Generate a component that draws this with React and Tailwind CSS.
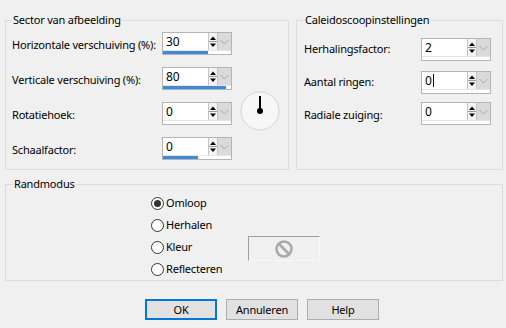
import React from 'react';

function SpinBox({ value, bar, caret }) {
  return (
    <div className="flex h-[23px] w-[70px] flex-col border border-[#b4b4b4] bg-white">
      <div className="flex h-[17px]">
        <div className="flex flex-1 items-center pl-[3px] text-[12px] leading-none tracking-normal text-black">
          {value}
          {caret && <span className="ml-[1px] h-[13px] w-px bg-black" />}
        </div>
        <div className="flex w-[10px] items-center justify-center border-x border-[#c4c4c4] bg-[#f4f4f4]">
          <svg width="8" height="15" viewBox="0 0 8 15">
            <path d="M1 6 L4 2.5 L7 6 Z" fill="#000" />
            <line x1="0" y1="7.5" x2="8" y2="7.5" stroke="#9a9a9a" strokeWidth="1" />
            <path d="M1 9.5 L4 13 L7 9.5 Z" fill="#000" />
          </svg>
        </div>
        <div className="flex w-[13px] items-center justify-center bg-[#dadada]">
          <svg width="9" height="6" viewBox="0 0 9 6">
            <path d="M0.5 1 L4.5 5 L8.5 1" fill="none" stroke="#a8a8a8" strokeWidth="1" />
          </svg>
        </div>
      </div>
      <div className="h-[4px] border-t border-[#e6e6e6] bg-white">
        {bar !== undefined && <div className="h-full bg-[#3f8bd8]" style={{ width: bar }} />}
      </div>
    </div>
  );
}

function Radio({ label, checked }) {
  return (
    <div className="flex h-[22px] items-center">
      <span className="flex h-[13px] w-[13px] items-center justify-center rounded-full border border-[#333333] bg-white">
        {checked && <span className="h-[7px] w-[7px] rounded-full bg-[#333333]" />}
      </span>
      <span className="ml-[2px] text-black">{label}</span>
    </div>
  );
}

function Dial() {
  return (
    <svg width="42" height="42" viewBox="0 0 42 42">
      <circle cx="21" cy="21" r="19" fill="#f7f7f7" stroke="#d4d4d4" strokeWidth="1" />
      <line x1="21" y1="6" x2="21" y2="21" stroke="#000" strokeWidth="2" />
      <circle cx="21" cy="21" r="3" fill="#000" />
    </svg>
  );
}

export default function App() {
  return (
    <div className="h-[328px] w-[506px] overflow-hidden whitespace-nowrap bg-[#f0f0f0] font-['Noto_Sans',sans-serif] text-[11px] tracking-[-0.2px] text-black">
      <div className="flex pt-[12px]">
        <fieldset className="ml-[5px] h-[158px] w-[284px] border border-[#dcdcdc] px-[6px]">
          <legend className="px-[1px] leading-[16px]">Sector van afbeelding</legend>
          <div className="grid grid-cols-[150px_70px_auto] grid-rows-[repeat(4,23px)] gap-y-[12px] pt-[4px]">
            <div className="flex items-center pt-[4px]">Horizontale verschuiving (%):</div>
            <SpinBox value="30" bar={45} />
            <div />
            <div className="flex items-center pt-[4px]">Verticale verschuiving (%):</div>
            <SpinBox value="80" bar={63} />
            <div className="row-span-2 ml-[7px] mt-[23px] self-start">
              <Dial />
            </div>
            <div className="flex items-center pt-[4px]">Rotatiehoek:</div>
            <SpinBox value="0" />
            <div className="flex items-center pt-[4px]">Schaalfactor:</div>
            <SpinBox value="0" bar={35} />
          </div>
        </fieldset>
        <fieldset className="ml-[7px] h-[158px] w-[207px] border border-[#dcdcdc] px-[7px]">
          <legend className="px-[1px] leading-[16px]">Caleidoscoopinstellingen</legend>
          <div className="flex flex-col pt-[10px]">
            <div className="flex items-center">
              <span className="w-[117px]">Herhalingsfactor:</span>
              <SpinBox value="2" bar={0} />
            </div>
            <div className="mt-[10px] flex items-center">
              <span className="w-[117px]">Aantal ringen:</span>
              <SpinBox value="0" caret bar={0} />
            </div>
            <div className="mt-[8px] flex items-center">
              <span className="w-[117px] pt-[3px]">Radiale zuiging:</span>
              <SpinBox value="0" bar={0} />
            </div>
          </div>
        </fieldset>
      </div>

      <fieldset className="ml-[5px] mt-[6px] w-[498px] border border-[#dcdcdc] pl-[145px]">
        <legend className="-ml-[138px] px-[1px] leading-[16px]">Randmodus</legend>
        <div className="grid grid-cols-[97px_auto] grid-rows-[repeat(4,22px)]">
          <div className="col-start-1 row-start-1"><Radio label="Omloop" checked /></div>
          <div className="col-start-1 row-start-2"><Radio label="Herhalen" /></div>
          <div className="col-start-1 row-start-3"><Radio label="Kleur" /></div>
          <div className="col-start-1 row-start-4"><Radio label="Reflecteren" /></div>
          <div className="col-start-2 row-start-3 flex h-[25px] w-[72px] items-center justify-center self-start border border-t-[#a0a0a0] border-l-[#a0a0a0] border-b-[#f8f8f8] border-r-[#f8f8f8] bg-[#f0f0f0]">
            <svg width="20" height="20" viewBox="0 0 20 20">
              <circle cx="10" cy="10" r="7.5" fill="none" stroke="#a8a8a8" strokeWidth="2.5" />
              <line x1="5" y1="5" x2="15" y2="15" stroke="#a8a8a8" strokeWidth="2.5" />
            </svg>
          </div>
        </div>
      </fieldset>

      <div className="mt-[18px] flex gap-[9px] pl-[145px]">
        <button className="h-[21px] w-[72px] border-2 border-[#0078d7] bg-[#e1e1e1] text-[11px] leading-none">OK</button>
        <button className="h-[21px] w-[72px] border border-[#adadad] bg-[#e1e1e1] text-[11px] leading-none">Annuleren</button>
        <button className="h-[21px] w-[72px] border border-[#adadad] bg-[#e1e1e1] text-[11px] leading-none">Help</button>
      </div>
    </div>
  );
}
